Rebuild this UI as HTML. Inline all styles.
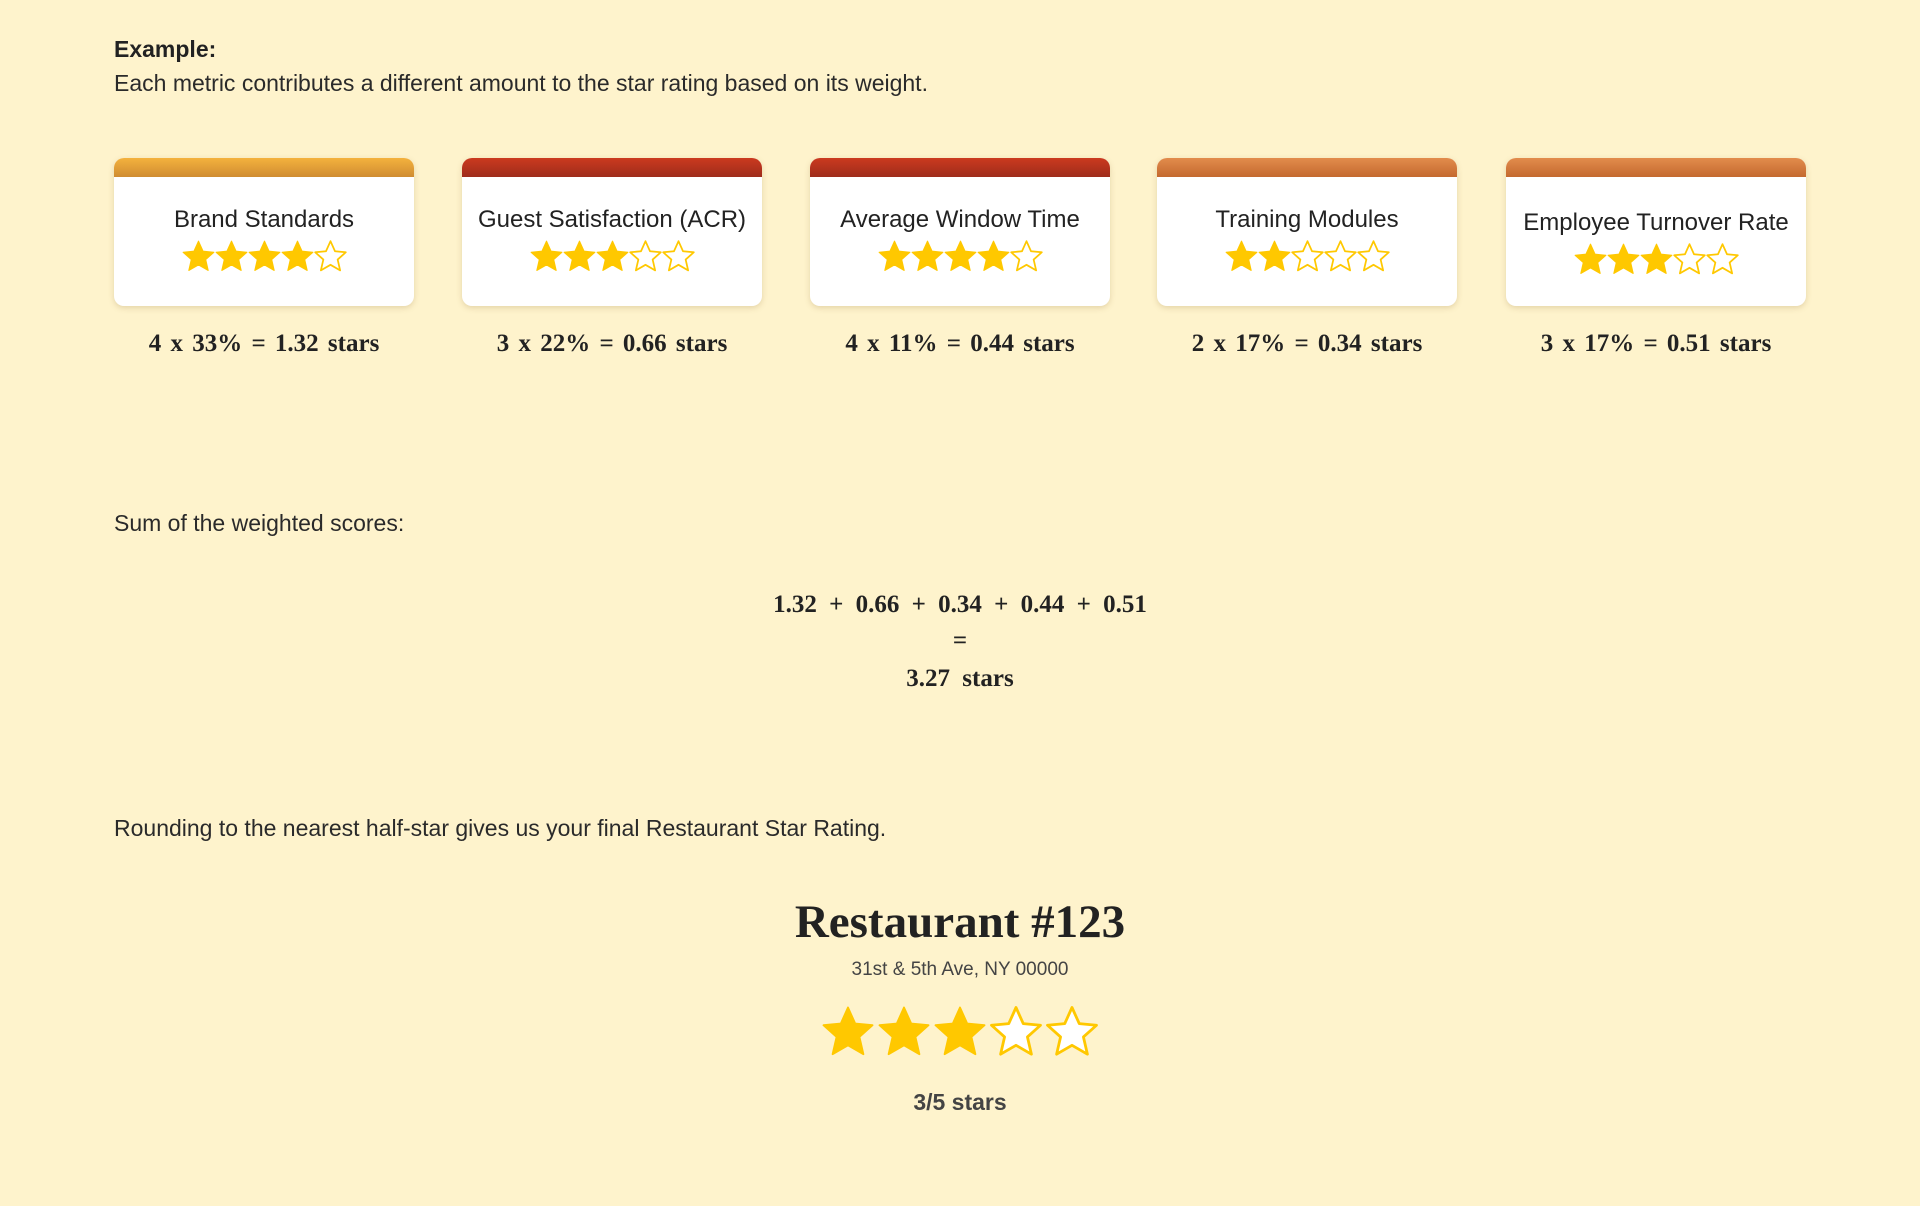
<!DOCTYPE html>
<html><head><meta charset="utf-8"><style>
body{margin:0;background:#fef3cc;font-family:"Liberation Sans",sans-serif;color:#222;width:1920px;height:1206px;overflow:hidden;position:relative}
.a{position:absolute}
.t{font-size:23px;color:#2a2a2a}
.card{position:absolute;top:158px;width:300px;height:148px;background:#fff;border-radius:10px;box-shadow:0 2px 6px rgba(150,120,60,.25);overflow:hidden;text-align:center}
.card .h{height:19px}
.card .n{margin-top:29px;font-size:24px;color:#222}
.card .s{margin-top:5px;display:flex;justify-content:center}
.f{position:absolute;top:330px;width:300px;text-align:center;font-family:"Liberation Serif",serif;font-weight:bold;font-size:25px;color:#222;word-spacing:3px}
.eq{position:absolute;left:0;width:1920px;text-align:center;font-family:"Liberation Serif",serif;font-weight:bold;font-size:25px;word-spacing:6px}
</style></head><body>
<svg width="0" height="0" style="position:absolute"><defs><path id="st" d="M12 1.5l3.1 6.9 7.4.7-5.6 5 1.7 7.4L12 17.7l-6.6 3.8 1.7-7.4-5.6-5 7.4-.7z"/></defs></svg>
<div class="a" style="left:114px;top:36px;font-size:23px;font-weight:bold">Example:</div>
<div class="a t" style="left:114px;top:70px">Each metric contributes a different amount to the star rating based on its weight.</div>

<div class="card" style="left:114px"><div class="h" style="background:linear-gradient(#f4b23d,#cf8c32)"></div><div class="n">Brand Standards</div><div class="s" id="s1"></div></div>
<div class="card" style="left:462px"><div class="h" style="background:linear-gradient(#cb3a1f,#9e2c1b)"></div><div class="n">Guest Satisfaction (ACR)</div><div class="s" id="s2"></div></div>
<div class="card" style="left:810px"><div class="h" style="background:linear-gradient(#cb3a1f,#9e2c1b)"></div><div class="n">Average Window Time</div><div class="s" id="s3"></div></div>
<div class="card" style="left:1157px"><div class="h" style="background:linear-gradient(#e28c4c,#c4692f)"></div><div class="n">Training Modules</div><div class="s" id="s4"></div></div>
<div class="card" style="left:1506px"><div class="h" style="background:linear-gradient(#e28c4c,#c4692f)"></div><div class="n" style="margin-top:32px">Employee Turnover Rate</div><div class="s" id="s5"></div></div>

<div class="f" style="left:114px">4 x 33% = 1.32 stars</div>
<div class="f" style="left:462px">3 x 22% = 0.66 stars</div>
<div class="f" style="left:810px">4 x 11% = 0.44 stars</div>
<div class="f" style="left:1157px">2 x 17% = 0.34 stars</div>
<div class="f" style="left:1506px">3 x 17% = 0.51 stars</div>

<div class="a t" style="left:114px;top:510px">Sum of the weighted scores:</div>
<div class="eq" style="top:591px">1.32 + 0.66 + 0.34 + 0.44 + 0.51</div>
<div class="eq" style="top:627px">=</div>
<div class="eq" style="top:665px">3.27 stars</div>

<div class="a t" style="left:114px;top:815px">Rounding to the nearest half-star gives us your final Restaurant Star Rating.</div>
<div class="a" style="left:0;width:1920px;text-align:center;top:895px;font-family:'Liberation Serif',serif;font-weight:bold;font-size:47px;color:#222">Restaurant #123</div>
<div class="a" style="left:0;width:1920px;text-align:center;top:959px;font-size:19px;color:#444">31st &amp; 5th Ave, NY 00000</div>
<div class="a" id="big" style="left:0;width:1920px;top:1004px;display:flex;justify-content:center"></div>
<div class="a" style="left:0;width:1920px;text-align:center;top:1089px;font-size:23px;font-weight:bold;color:#444">3/5 stars</div>
<script>
function stars(id,n,sz){var h='';for(var i=0;i<5;i++){h+='<svg width="'+sz+'" height="'+sz+'" viewBox="0 0 24 24" style="margin:0 '+(sz>40?0:-1)+'px"><use href="#st" fill="'+(i<n?'#ffc800':'#fff')+'" stroke="#ffc800" stroke-width="'+(i<n?0.8:1.2)+'" stroke-linejoin="round"/></svg>';}document.getElementById(id).innerHTML=h;}
stars('s1',4,35);stars('s2',3,35);stars('s3',4,35);stars('s4',2,35);stars('s5',3,35);stars('big',3,56);
</script>
</body></html>
